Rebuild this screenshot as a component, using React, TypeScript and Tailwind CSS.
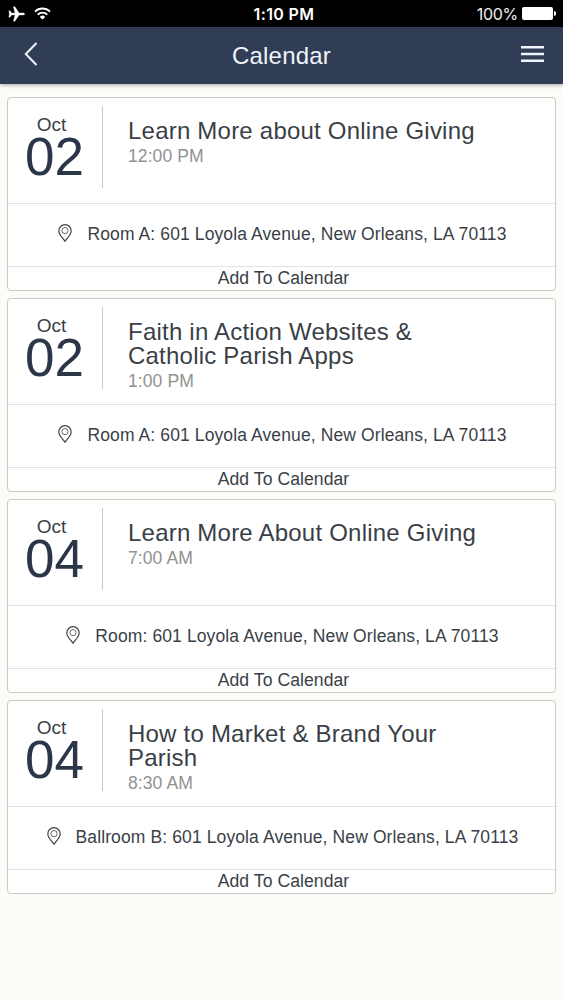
const FONT = 'font-["Liberation_Sans",Arial,sans-serif]';

type CalendarEvent = {
  id: number;
  month: string;
  day: string;
  title: string[];
  time: string;
  location: string;
};

const EVENTS: CalendarEvent[] = [
  { id: 1, month: 'Oct', day: '02', title: ['Learn More about Online Giving'], time: '12:00 PM', location: 'Room A: 601 Loyola Avenue, New Orleans, LA 70113' },
  { id: 2, month: 'Oct', day: '02', title: ['Faith in Action Websites &', 'Catholic Parish Apps'], time: '1:00 PM', location: 'Room A: 601 Loyola Avenue, New Orleans, LA 70113' },
  { id: 3, month: 'Oct', day: '04', title: ['Learn More About Online Giving'], time: '7:00 AM', location: 'Room: 601 Loyola Avenue, New Orleans, LA 70113' },
  { id: 4, month: 'Oct', day: '04', title: ['How to Market & Brand Your', 'Parish'], time: '8:30 AM', location: 'Ballroom B: 601 Loyola Avenue, New Orleans, LA 70113' },
];

function PlaneIcon() {
  return (
    <svg width="17" height="16" viewBox="0 0 17 16" fill="#fff" stroke="#fff" strokeWidth=".3" strokeLinejoin="round">
      <path d="M16.700 8c0 .7-.8 1.100-1.900 1.100h-3.700L6.900 15.300H5.400L7 9.100H3.600L2 11.200H.8L1.400 8 .8 4.800H2l1.600 2.100H7L5.400.7h1.500l4.200 6.200h3.700c1.100 0 1.900.4 1.900 1.100z" />
    </svg>
  );
}

function WifiIcon() {
  return (
    <svg width="17" height="13" viewBox="0 0 17 13" fill="none" stroke="#fff" strokeWidth="1.900">
      <path d="M1 4.600a10.600 10.600 0 0 1 15 0" />
      <path d="M3.700 7.600a6.800 6.800 0 0 1 9.600 0" />
      <path d="M8.500 12.600 5.800 9.900a3.800 3.800 0 0 1 5.400 0z" fill="#fff" stroke="none" />
    </svg>
  );
}

function PinIcon() {
  return (
    <svg className="mb-[3px]" width="14" height="18" viewBox="0 0 14 18" fill="none" stroke="#3f444a">
      <path d="M7 17.200C5.600 14.600.8 10.900.8 6.900a6.200 6.200 0 0 1 12.400 0c0 4-4.800 7.700-6.200 10.300z" strokeWidth="1.200" />
      <circle cx="7" cy="6.600" r="3.100" strokeWidth=".8" />
    </svg>
  );
}

function StatusBar() {
  return (
    <div className="grid h-[27px] grid-cols-3 items-center bg-black pr-[7px] pl-2 text-white">
      <div className="flex items-center gap-[9px]">
        <PlaneIcon />
        <WifiIcon />
      </div>
      <div className='pt-[2px] pl-[4px] text-center font-["Inter",sans-serif] text-[16px] leading-[25px] font-semibold tracking-[0.35px]'>1:10 PM</div>
      <div className="flex items-center justify-end gap-[4px]">
        <span className='pt-[2px] font-["Inter",sans-serif] text-[16px] leading-[25px] tracking-[-0.3px] text-[#f0f0f0]'>100%</span>
        <div className="flex items-center gap-px">
          <div className="h-[13px] w-[31px] rounded-[2px] bg-white" />
          <div className="h-[5px] w-[2px] rounded-r-full bg-white" />
        </div>
      </div>
    </div>
  );
}

function Header() {
  return (
    <header className="grid h-[57px] grid-cols-3 items-center bg-[#303d54] px-[19px] text-[#eef4fb] shadow-[0_1px_4px_rgba(0,0,0,0.35)]">
      <button className="ml-[5px] w-[14px]" aria-label="Back">
        <svg className="mb-[4px]" width="14" height="24" viewBox="0 0 14 24" fill="none" stroke="currentColor" strokeWidth="2">
          <path d="M12.500 1 1.800 12l10.700 11" />
        </svg>
      </button>
      <h1 className="text-center text-[24px] tracking-[0.2px]">Calendar</h1>
      <button className="justify-self-end pb-[3px]" aria-label="Menu">
        <svg width="23" height="18" viewBox="0 0 23 18" stroke="currentColor" strokeWidth="2.400">
          <path d="M0 2.200h23M0 9h23M0 15.800h23" />
        </svg>
      </button>
    </header>
  );
}

function EventCard({ event }: { event: CalendarEvent }) {
  return (
    <article className="h-[194px] rounded-[4px] border border-[#cfc9c4] bg-white text-[#3a3f47]">
      <div className="flex h-[106px] items-start border-b border-[#e3e3e6] pt-2">
        <div className="flex h-[82px] w-[95px] flex-col items-center border-r border-[#c9c9cb]">
          <span className="mt-[7px] mr-[7px] text-[19px] leading-[23px]">{event.month}</span>
          <span className="-mt-[1px] mr-[1px] text-[53px] leading-[43px] text-[#2b3648]">{event.day}</span>
        </div>
        <div className="pt-[13px] pl-[25px]">
          <h2 className="text-[24px] leading-[24px] tracking-[0.220px]">
            {event.title.map(line => <span key={line} className="block whitespace-nowrap">{line}</span>)}
          </h2>
          <p className="mt-[2px] text-[17.600px] leading-[22px] tracking-[0.050px] text-[#929292]">{event.time}</p>
        </div>
      </div>
      <div className="flex h-[63px] items-center justify-center gap-[15px] border-b border-[#e3e3e6] pb-[2px] pl-[2px]">
        <PinIcon />
        <span className="text-[17.500px] whitespace-nowrap tracking-[0.110px]">{event.location}</span>
      </div>
      <button className="block h-[23px] w-full pl-[4px] text-center text-[17.600px] leading-[23px] tracking-[0.050px]">Add To Calendar</button>
    </article>
  );
}

export default function App() {
  return (
    <div className={`h-[1000px] w-[563px] overflow-hidden bg-[#fcfbf7] ${FONT}`}>
      <StatusBar />
      <Header />
      <main className="flex flex-col gap-[7px] px-[7px] pt-[13px]">
        {EVENTS.map(event => <EventCard key={event.id} event={event} />)}
      </main>
    </div>
  );
}
